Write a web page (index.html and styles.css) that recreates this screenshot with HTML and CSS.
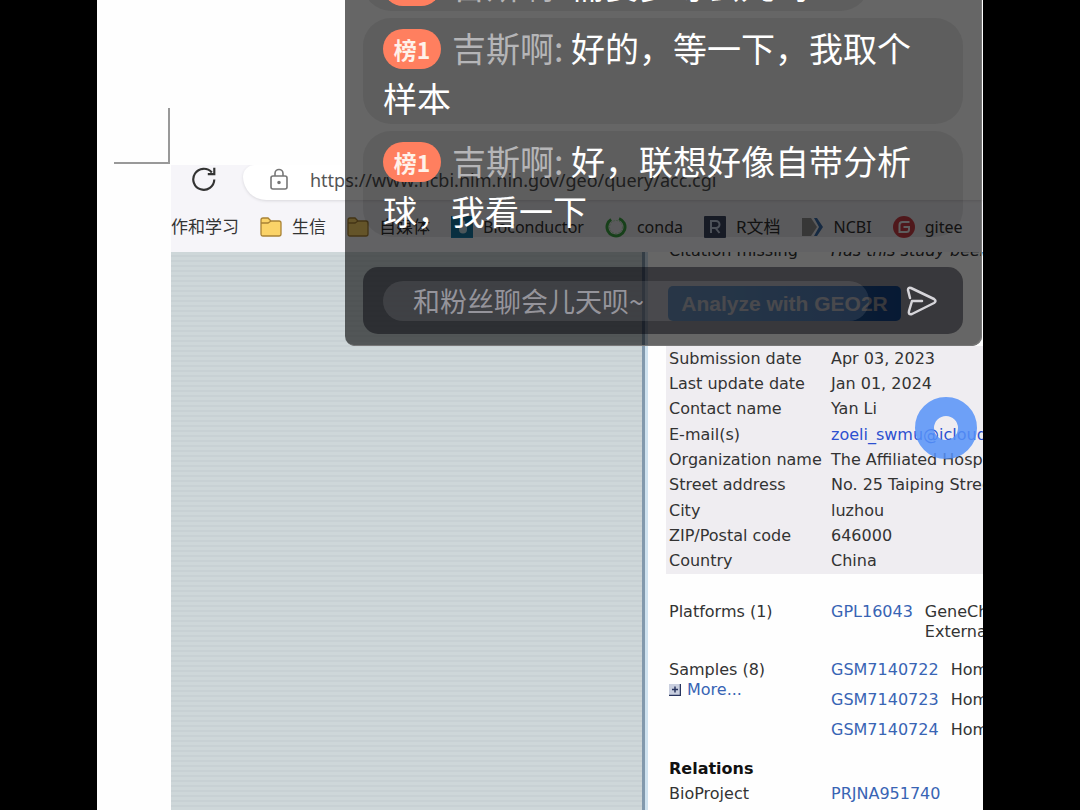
FILE: index.html
```html
<!DOCTYPE html>
<html lang="zh-CN">
<head>
<meta charset="utf-8">
<title>直播</title>
<link rel="stylesheet" href="styles.css">
</head>
<body>
<main class="stage">
  <div class="paper"><div class="crop-mark"></div></div>
  <section class="browser">
    <header class="toolbar">
      <div class="address-row">
        <button class="reload" aria-label="刷新">
          <svg viewBox="0 0 24 24" width="26" height="26" fill="none" stroke="#333" stroke-width="2"><path d="M21.5 12.5A9.7 9.7 0 1 1 19.2 6"/><path d="M21.5 1.5V7.500H15.500"/></svg>
        </button>
        <div class="address">
          <svg viewBox="0 0 20 24" width="20" height="24" fill="none" stroke="#777" stroke-width="1.600"><rect x="2" y="8" width="16" height="13" rx="2"/><path d="M6 8V5.500a4 4 0 0 1 8 0V8"/><circle cx="10" cy="14.500" r="1" fill="#555"/></svg>
          <input class="url" type="text" aria-label="地址" value="https://www.ncbi.nlm.nih.gov/geo/query/acc.cgi">
        </div>
      </div>
      <nav class="bookmarks">
        <a href="#">作和学习</a>
        <a href="#"><svg class="mark" viewBox="0 0 22 22"><path d="M1 4Q1 2 3 2H8L11 5H19Q21 5 21 7V18Q21 20 19 20H3Q1 20 1 18Z" fill="#fbd368" stroke="#a98235" stroke-width="1.300"/><path d="M1 7H8L11 5" fill="none" stroke="#a98235" stroke-width="1.300"/></svg>生信</a>
        <a href="#"><svg class="mark" viewBox="0 0 22 22"><path d="M1 4Q1 2 3 2H8L11 5H19Q21 5 21 7V18Q21 20 19 20H3Q1 20 1 18Z" fill="#fbd368" stroke="#a98235" stroke-width="1.300"/><path d="M1 7H8L11 5" fill="none" stroke="#a98235" stroke-width="1.300"/></svg>自媒体</a>
        <a class="latin" href="#"><svg class="mark" viewBox="0 0 22 22"><rect width="22" height="22" fill="#1a81b0"/><path d="M13 4Q8 10 8 13.500a4 4 0 0 0 8 0Q16 10 13 4Z" fill="#cfeaf5"/></svg>Bioconductor</a>
        <a class="latin" href="#"><svg class="mark" viewBox="0 0 22 22" fill="none" stroke-width="3"><circle cx="11" cy="11" r="9" stroke="#43b049" stroke-dasharray="48 9" transform="rotate(-70 11 11)"/><circle cx="11" cy="11" r="6.500" stroke="#b8e6bc" stroke-width="1" stroke-dasharray="2 1"/></svg>conda</a>
        <a href="#"><svg class="mark" viewBox="0 0 22 22"><rect width="22" height="22" rx="1" fill="#404b68"/><path d="M7 17V5H12a3.500 3.500 0 0 1 0 7H7M11.500 12L15.500 17" fill="none" stroke="#d0dcf0" stroke-width="2"/></svg>R文档</a>
        <a class="latin" href="#"><svg class="mark" viewBox="0 0 22 22"><path d="M0 2H9L15 11L9 20H0Z" fill="#969696"/><path d="M12 2H15L21 11L15 20H12L17 11Z" fill="#3e73b4"/></svg>NCBI</a>
        <a class="latin" href="#"><svg class="mark" viewBox="0 0 22 22"><circle cx="11" cy="11" r="11" fill="#d8444c"/><path d="M16.500 6H9.500Q6.500 6 6.500 9V16H13.500Q16 16 16 13.500V11H10.500" fill="none" stroke="#fff" stroke-width="2"/></svg>gitee</a>
      </nav>
    </header>
    <div class="page">
      <aside class="gutter"></aside>
      <article class="record">
        <div class="clipped"><span class="label">Citation missing</span><span><i>Has this study been published?</i></span></div>
        <button class="analyze">Analyze with GEO2R</button>
        <table class="details">
          <tr><th>Submission date</th><td>Apr 03, 2023</td></tr>
          <tr><th>Last update date</th><td>Jan 01, 2024</td></tr>
          <tr><th>Contact name</th><td>Yan Li</td></tr>
          <tr><th>E-mail(s)</th><td><a class="mail" href="#">zoeli_swmu@icloud.com</a></td></tr>
          <tr><th>Organization name</th><td>The Affiliated Hospital</td></tr>
          <tr><th>Street address</th><td>No. 25 Taiping Street</td></tr>
          <tr><th>City</th><td>luzhou</td></tr>
          <tr><th>ZIP/Postal code</th><td>646000</td></tr>
          <tr><th>Country</th><td>China</td></tr>
        </table>
        <section class="entry platforms">
          <div class="label">Platforms (1)</div>
          <div class="line"><a href="#">GPL16043</a><span>GeneChip<br>External</span></div>
        </section>
        <section class="entry samples">
          <div class="label">Samples (8)<br><a class="more" href="#"><svg viewBox="0 0 12 12" width="12" height="12"><path d="M0 0H11V11H0Z" fill="#c9cfdf"/><path d="M11.500 0V11.500H0M3 5.500H9M6 2.500V8.500" fill="none" stroke="#28355f" stroke-width="1.500"/></svg>More...</a></div>
          <div class="list">
            <div class="line"><a href="#">GSM7140722</a><span>Homo</span></div>
            <div class="line"><a href="#">GSM7140723</a><span>Homo</span></div>
            <div class="line"><a href="#">GSM7140724</a><span>Homo</span></div>
          </div>
        </section>
        <h2 class="relations">Relations</h2>
        <section class="entry"><div class="label">BioProject</div><a href="#">PRJNA951740</a></section>
      </article>
    </div>
  </section>

  <div class="touch"></div>

  <section class="chat">
    <p class="bubble short"><span class="rank">榜1</span><span class="name">吉斯啊: </span>需要多等会儿吗?</p>
    <p class="bubble"><span class="rank">榜1</span><span class="name">吉斯啊: </span>好的，等一下，我取个样本</p>
    <p class="bubble"><span class="rank">榜1</span><span class="name">吉斯啊: </span>好，联想好像自带分析球，我看一下</p>
    <form class="composer">
      <input type="text" aria-label="聊天" placeholder="和粉丝聊会儿天呗~">
      <button type="button" aria-label="发送"><svg viewBox="0 0 32 32" width="32" height="32" fill="none" stroke="#d6d5da" stroke-width="2.500" stroke-linejoin="round" stroke-linecap="round"><path d="M4 13L2 5Q2 2 5 3L28 14Q31 16 28 18L6 29Q2 30 3 26L6 16H16"/></svg></button>
    </form>
  </section>
</main>
</body>
</html>
```
FILE: styles.css
```css
* { box-sizing: border-box; }
body {
  margin: 0;
  background: #000;
  color: #333;
  font-family: "DejaVu Sans", "Noto Sans CJK SC", sans-serif;
  font-size: 16px;
  line-height: 20px;
}
button, input { font: inherit; border: 0; background: none; padding: 0; margin: 0; }
a { color: #3864b4; text-decoration: none; }

.stage {
  position: relative;
  display: flex;
  flex-direction: column;
  height: 100vh;
  margin: 0 97px;
  overflow: hidden;
  background: #fefefe;
}
.paper { flex: none; height: 165px; padding: 108px 0 0 17px; }
.crop-mark { width: 56px; height: 56px; border: solid #999; border-width: 0 2px 2px 0; }

.browser { flex: 1; min-height: 0; display: flex; flex-direction: column; margin-left: 74px; }
.toolbar { flex: none; height: 87px; background: #f6f5f9; overflow: hidden; }
.address-row { display: flex; align-items: flex-start; height: 46px; }
.reload { width: 26px; height: 28px; margin: 0 26px 0 20px; }
.reload svg { display: block; }
.address {
  flex: 1;
  display: flex;
  align-items: center;
  gap: 21px;
  height: 35px;
  padding: 0 0 6px 26px;
  background: #fff;
  border-radius: 12px 0 0 24px;
  box-shadow: 0 1px 3px #d8d7dc;
}
.url { flex: 1; color: #555; font: 18px/26px "Noto Sans", sans-serif; }
.bookmarks { display: flex; gap: 21px; height: 32px; align-items: center; white-space: nowrap; }
.bookmarks a {
  display: flex;
  align-items: center;
  gap: 10px;
  color: #333;
  font: 17px/24px "Noto Sans", "Noto Sans CJK SC", sans-serif;
}
.bookmarks .latin { font-size: 16px; }
.mark { width: 22px; height: 22px; flex: none; }

.page { flex: 1; min-height: 0; display: flex; overflow: hidden; }
.gutter {
  flex: none;
  width: 477px;
  border-right: 3px solid #cfe2ef;
  box-shadow: inset -3px 0 #8299ad;
  background: repeating-linear-gradient(#ced7d9 0 3px, #c8d1d4 3px 5px);
}
.record { flex: 1; min-width: 0; overflow: hidden; padding-left: 18px; white-space: nowrap; }
.label { flex: none; width: 165px; padding-left: 3px; }
.clipped { display: flex; align-items: flex-end; height: 9px; overflow: hidden; }
.analyze {
  display: block;
  margin: 25px 0 25px 2px;
  width: 233px;
  height: 35px;
  border-radius: 5px;
  background: linear-gradient(90deg, #5aa4e0, #2478dc);
  color: #fff;
  font: bold 21px/34px "Liberation Sans", sans-serif;
}
.details { width: 100%; height: 228px; table-layout: fixed; border-collapse: collapse; background: #efedf1; }
.details th, .details td { padding: 0; text-align: left; font-weight: normal; }
.details th { width: 165px; padding-left: 3px; }
.details .mail { color: #2c50d0; }
.entry { display: flex; }
.line { display: flex; gap: 12px; }
.platforms { margin-top: 28px; }
.samples { margin-top: 18px; }
.list { display: grid; row-gap: 10px; }
.more { display: flex; align-items: center; gap: 6px; }
.relations { margin: 19px 0 5px 3px; font-size: 16px; line-height: 20px; color: #111; }

.touch {
  position: absolute;
  left: 818px;
  top: 397px;
  width: 62px;
  height: 62px;
  border: 19px solid rgba(86, 146, 248, 0.85);
  border-radius: 50%;
}

.chat {
  position: absolute;
  left: 248px;
  right: 1px;
  bottom: calc(100% - 346px);
  display: flex;
  flex-direction: column;
  gap: 7px;
  padding: 0 19px 12px 18px;
  background: rgba(0, 0, 0, 0.6);
  box-shadow: inset -1px -1px #777;
  border-radius: 0 0 10px 10px;
}
.bubble {
  margin: 0;
  padding: 5px 20px 1px;
  border-radius: 28px;
  background: rgba(0, 0, 0, 0.08);
  color: #fff;
  font: 34px/50px "Noto Sans CJK SC", sans-serif;
}
.short { align-self: flex-start; padding-right: 44px; }
.name { color: #b5b5b7; }
.rank {
  display: inline-block;
  width: 58px;
  height: 40px;
  margin-right: 11px;
  border-radius: 20px;
  background: #ff7f5f;
  color: #fff1e9;
  font-size: 23px;
  font-weight: 700;
  line-height: 40px;
  text-align: center;
  vertical-align: 3px;
}
.composer {
  display: flex;
  align-items: center;
  gap: 37px;
  height: 67px;
  margin-top: 23px;
  padding: 0 25px 0 20px;
  border-radius: 15px;
  background: rgba(0, 0, 8, 0.45);
}
.composer input {
  flex: 1;
  min-width: 0;
  height: 40px;
  padding: 0 30px;
  border-radius: 20px;
  background: rgba(255, 255, 255, 0.09);
  font: 27px/40px "Noto Sans CJK SC", sans-serif;
}
.composer input::placeholder { color: #95949b; opacity: 1; }
.composer button { height: 32px; }
.composer svg { display: block; }
```
